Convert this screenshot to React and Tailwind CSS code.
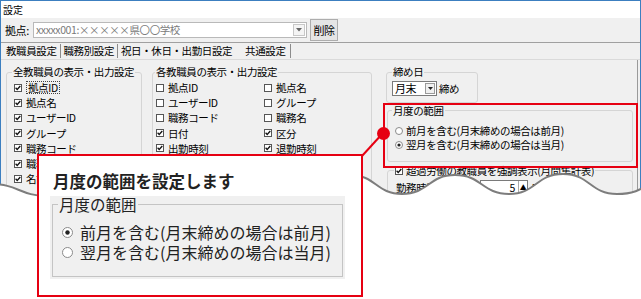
import React from 'react'

const Check = ({ on }) => (
  <svg width="8" height="8" viewBox="0 0 8 8" className="shrink-0">
    <rect x="0.5" y="0.5" width="7" height="7" fill="#fff" stroke="#555" />
    {on && <path d="M1.6 3.8 L3.2 5.5 L6.3 2" fill="none" stroke="#111" strokeWidth="1.3" />}
  </svg>
)

const Radio = ({ on, size = 8 }) => {
  const r = size / 2 - 0.5
  return (
    <svg width={size} height={size} viewBox={`0 0 ${size} ${size}`} className="shrink-0">
      <circle cx={size / 2} cy={size / 2} r={r} fill="#fff" stroke="#8a8a8a" />
      {on && <circle cx={size / 2} cy={size / 2} r={size / 5} fill="#222" />}
    </svg>
  )
}

const Item = ({ on, children, focus }) => (
  <div className="flex items-center gap-[4px] h-[15.2px]">
    <Check on={on} />
    <span className={focus ? 'border border-dotted border-[#444] leading-[11px] px-[1px]' : 'leading-[11px]'}>{children}</span>
  </div>
)

const all = [
  ['拠点ID', true, true],
  ['拠点名', true],
  ['ユーザーID', true],
  ['グループ', true],
  ['職務コード', true],
  ['職務名', true],
  ['名前', true],
]

const each = [
  ['拠点ID', false], ['拠点名', false],
  ['ユーザーID', false], ['グループ', false],
  ['職務コード', false], ['職務名', false],
  ['日付', true], ['区分', true],
  ['出勤時刻', true], ['退勤時刻', true],
]

const Wave = () => {
  const pts = [
    [-10, 184], [48, 196], [105, 176], [165, 195], [225, 176], [288, 195],
    [350, 175], [402, 194], [455, 175], [509, 194], [563, 174], [617, 194], [680, 176],
  ]
  let d = `M${pts[0][0]},${pts[0][1]}`
  for (let i = 1; i < pts.length; i++) {
    const [x1, y1] = pts[i - 1]
    const [x2, y2] = pts[i]
    const h = (x2 - x1) / 2
    d += ` C${x1 + h},${y1} ${x2 - h},${y2} ${x2},${y2}`
  }
  return (
    <svg className="absolute left-0 top-0" width="641" height="299" viewBox="0 0 641 299">
      <path d={`${d} L680,299 L-10,299 Z`} fill="#fff" />
      <path d={d} fill="none" stroke="#7d7d7d" strokeWidth="2" />
    </svg>
  )
}

export default function App() {
  return (
    <div className="relative w-[641px] h-[299px] overflow-hidden bg-white text-black font-['Noto_Sans_CJK_JP',sans-serif]">
      {/* dialog */}
      <div className="h-[202px] border-x border-t border-[#3c7fc0] flex flex-col">
        <div className="h-[17px] bg-white text-[10px] leading-[17px] pl-[2px]">設定</div>
        <div className="flex-1 bg-[#f0f0f0] flex flex-col text-[10.5px] tracking-[-0.4px]">
          <div className="h-[25px] flex items-center border-b border-[#a0a0a0] pl-[4px]">
            <span className="w-[28px] text-[11px]">拠点:</span>
            <div className="w-[274px] h-[16px] bg-white border border-[#b9b9b9] flex items-center">
              <span className="flex-1 pl-[2px] text-[#7a7a7a] leading-[14px]">xxxxx001:×××××県〇〇学校</span>
              <div className="w-[12px] h-[12px] mr-[1px] border border-[#c8c8c8] bg-[#f4f4f4] flex items-center justify-center">
                <svg width="6" height="4" viewBox="0 0 6 4"><path d="M0 0 L6 0 L3 3.5 Z" fill="#666" /></svg>
              </div>
            </div>
            <div className="ml-[3px] w-[28px] h-[22px] border border-[#adadad] bg-[#e5e5e5] flex items-center justify-center text-[11px]">削除</div>
          </div>
          <div className="h-[17px] flex items-center border-b border-[#dadada] pl-[3px]">
            <span className="px-[2px] pr-[3px] border-r border-[#8c8c8c] leading-[14px]">教職員設定</span>
            <span className="px-[3px] border-r border-[#8c8c8c] leading-[14px]">職務別設定</span>
            <span className="px-[3px] leading-[14px]">祝日・休日・出勤日設定</span>
            <span className="ml-[6px] px-[4px] border-r border-[#8c8c8c] leading-[14px]">共通設定</span>
          </div>
          <div className="flex-1 flex gap-[10px] pl-[5px] pt-[5px] mr-[2px] border-r border-[#9a9a9a]">
            <fieldset className="w-[136px] h-[140px] border border-[#d5d5d5] rounded-[3px] pl-[7px] pt-[1px]">
              <legend className="ml-[-2px] px-[1px] leading-[14px]">全教職員の表示・出力設定</legend>
              {all.map(([t, on, f]) => (
                <Item key={t} on={on} focus={f}>{t}</Item>
              ))}
            </fieldset>
            <fieldset className="w-[220px] h-[140px] border border-[#d5d5d5] rounded-[3px] pl-[3px] pt-[1px]">
              <legend className="ml-[-1px] px-[1px] leading-[14px]">各教職員の表示・出力設定</legend>
              <div className="grid grid-cols-[108px_1fr]">
                {each.map(([t, on]) => (
                  <Item key={t} on={on}>{t}</Item>
                ))}
              </div>
            </fieldset>
            <div className="ml-[4px] w-[247px] flex flex-col">
              <fieldset className="w-[92px] border border-[#d5d5d5] rounded-[3px] pl-[5px] pb-[5px]">
                <legend className="px-[1px] leading-[14px]">締め日</legend>
                <div className="flex items-center mt-[2px]">
                  <div className="w-[45px] h-[15px] bg-white border border-[#7a7a7a] flex items-center">
                    <span className="flex-1 pl-[2px] text-[11px] leading-[13px]">月末</span>
                    <div className="w-[10px] h-[11px] mr-[1px] border border-[#9a9a9a] bg-[#f0f0f0] flex items-center justify-center">
                      <svg width="5" height="3" viewBox="0 0 5 3"><path d="M0 0 L5 0 L2.5 3 Z" fill="#222" /></svg>
                    </div>
                  </div>
                  <span className="ml-[2px]">締め</span>
                </div>
              </fieldset>
              <fieldset className="mt-[1px] ml-[1px] w-[246px] border border-[#d5d5d5] rounded-[3px] pl-[7px] pt-[6px] pb-[9px]">
                <legend className="ml-[-3px] px-[1px] leading-[14px]">月度の範囲</legend>
                <div className="h-[14px] flex items-center gap-[3px]"><Radio /><span>前月を含む(月末締めの場合は前月)</span></div>
                <div className="h-[14px] flex items-center gap-[3px]"><Radio on /><span>翌月を含む(月末締めの場合は当月)</span></div>
              </fieldset>
              <fieldset className="mt-[2px] ml-[1px] w-[246px] h-[40px] border border-[#d5d5d5] rounded-[3px] pl-[8px]">
                <legend className="ml-[-2px] px-[1px] leading-[14px] flex items-center gap-[3px]"><Check on /><span>超過労働の教職員を強調表示(月間集計表)</span></legend>
                <div className="flex items-center gap-[4px] mt-[2px]">
                  <span className="w-[80px]">勤務時間が</span>
                  <div className="w-[48px] h-[15px] bg-white border border-[#7a7a7a] flex items-center justify-end">
                    <span className="pr-[3px]">5</span>
                    <span className="w-[9px] h-[13px] border-l border-[#aaa] text-[7px] leading-[13px] text-center">▲</span>
                  </div>
                  <span>時間以上</span>
                </div>
              </fieldset>
            </div>
          </div>
        </div>
      </div>

      {/* highlight */}
      <div className="absolute left-[383px] top-[103px] w-[255px] h-[65px] border-2 border-[#e60012]" />

      <Wave />

      <svg className="absolute left-0 top-0" width="641" height="299" viewBox="0 0 641 299">
        <line x1="383" y1="133" x2="362" y2="156" stroke="#e60012" strokeWidth="2" />
        <circle cx="383.5" cy="133.5" r="6.5" fill="#e60012" />
      </svg>

      {/* callout */}
      <div className="absolute left-[37px] top-[154px] w-[326px] h-[143px] border-2 border-[#e60012] bg-white pl-[11px]">
        <div className="mt-[15px] ml-[3px] text-[16.5px] font-bold leading-[20px] text-[#222]">月度の範囲を設定します</div>
        <div className="mt-[5px] w-[295px] h-[83px] bg-[#f0f0f0] px-[2px]">
          <fieldset className="w-[291px] h-[81px] border border-[#c4c4c4] pl-[9px] text-[#222]">
            <legend className="ml-[-4px] px-[1px] text-[15.5px] leading-[16px]">月度の範囲</legend>
            <div className="mt-[11px] h-[18px] flex items-center gap-[7px] text-[16px] leading-[18px]"><Radio on size={11} /><span>前月を含む(月末締めの場合は前月)</span></div>
            <div className="mt-[2px] h-[18px] flex items-center gap-[7px] text-[16px] leading-[18px]"><Radio size={11} /><span>翌月を含む(月末締めの場合は当月)</span></div>
          </fieldset>
        </div>
      </div>
    </div>
  )
}
